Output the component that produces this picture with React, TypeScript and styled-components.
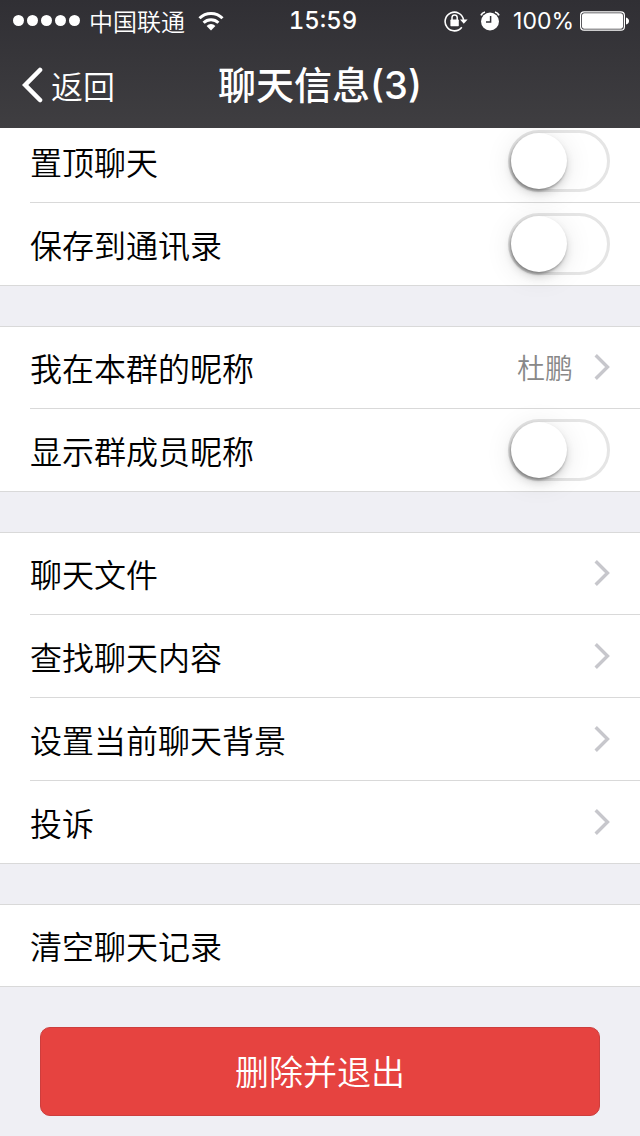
import React, { useState } from "react";
import styled, { createGlobalStyle } from "styled-components";

const GlobalStyle = createGlobalStyle`
  *, *::before, *::after { box-sizing: border-box; }
  body {
    margin: 0;
    background: #efeff4;
    font-family: "Noto Sans CJK SC", sans-serif;
    font-weight: 350;
    -webkit-font-smoothing: antialiased;
  }
  button, input { font: inherit; margin: 0; }
`;

const latinFirst = `Inter, "Noto Sans CJK SC", sans-serif`;

const Page = styled.div`
  min-height: 100vh;
`;

const Header = styled.header`
  position: sticky;
  top: 0;
  z-index: 1;
  color: #fff;
  background: linear-gradient(#302f34, #3f3e41);
`;

const StatusBar = styled.div`
  display: grid;
  grid-template-columns: 1fr auto 1fr;
  align-items: center;
  height: 41px;
  padding: 0 11px 0 13px;
  font-size: 24px;
  line-height: 38px;
`;

const StatusGroup = styled.div<{ $end?: boolean }>`
  display: flex;
  align-items: center;
  justify-content: ${(p) => (p.$end ? "flex-end" : "flex-start")};
`;

const SignalDots = styled.div`
  display: flex;
  gap: 3px;
  margin-right: 9px;
`;

const Dot = styled.span`
  width: 11px;
  height: 11px;
  border-radius: 50%;
  background: #fff;
`;

const Carrier = styled.span`
  margin-right: 13px;
`;

const Time = styled.time`
  padding-left: 4px;
  font-family: ${latinFirst};
  font-weight: 500;
  font-variant-numeric: tabular-nums;
`;

const Percent = styled.span`
  margin: 0 6px 0 13px;
  font-family: ${latinFirst};
  font-size: 23px;
  font-weight: 400;
`;

const NavBar = styled.div`
  display: grid;
  grid-template-columns: 1fr auto 1fr;
  align-items: center;
  height: 87px;
  padding: 0 22px;
`;

const BackButton = styled.button`
  display: flex;
  align-items: center;
  gap: 8px;
  justify-self: start;
  padding: 0;
  border: 0;
  background: none;
  color: inherit;
  font-size: 32px;
  line-height: 46px;
`;

const Title = styled.h1`
  margin: 0;
  font-family: ${latinFirst};
  font-size: 38px;
  font-weight: 500;
  line-height: 48px;
`;

const Content = styled.main`
  display: flex;
  flex-direction: column;
  gap: 40px;
  margin-top: -8px;
  padding-bottom: 20px;
`;

const Group = styled.section`
  background: #fff;
  border-bottom: 1px solid #d9d9d9;
`;

const rowLayout = `
  display: flex;
  align-items: center;
  width: 100%;
  height: 83px;
  padding: 0 30px 1px 0;
  border: 0;
  border-bottom: 1px solid #d9d9d9;
  background: none;
  color: #000;
  font-size: 32px;
  line-height: 48px;
  text-align: left;
`;

const Item = styled.div`
  padding-left: 30px;
  &:first-child { border-top: 1px solid #d9d9d9; }
  &:first-child > * { height: 82px; }
  &:last-child > * { height: 82px; border-bottom: 0; }
  &:first-child:last-child > * { height: 81px; }
`;

const SwitchRow = styled.label`
  ${rowLayout}
`;

const LinkRow = styled.button`
  ${rowLayout}
`;

const Label = styled.span`
  flex: 1;
`;

const Value = styled.span`
  margin-right: 21px;
  color: #888;
  font-size: 28px;
`;

const Switch = styled.input`
  appearance: none;
  width: 102px;
  height: 62px;
  border: 3px solid #e5e5e5;
  border-radius: 31px;
  background: #fff;
  &::before {
    content: "";
    display: block;
    width: 56px;
    height: 56px;
    border-radius: 50%;
    background: #fff;
    box-shadow: 0 4px 28px rgba(0, 0, 0, 0.1), 0 5px 8px rgba(0, 0, 0, 0.12),
      -1px 2px 3px rgba(0, 0, 0, 0.35);
  }
  &:checked { background: #4cd964; border-color: #4cd964; }
  &:checked::before { margin-left: 40px; }
`;

const DeleteButton = styled.button`
  height: 89px;
  margin: 0 40px;
  padding: 0 0 2px;
  border: 1px solid #cd3e3d;
  border-radius: 10px;
  background: #e64340;
  color: #fff;
  font-size: 34px;
  line-height: 48px;
`;

const WifiIcon = () => (
  <svg width="26" height="20" viewBox="0 0 26 20" fill="none" stroke="#fff" strokeWidth="3" aria-hidden="true">
    <path d="M1.5 7.2a16.3 16.3 0 0 1 23 0" />
    <path d="M5.6 11.7a10.5 10.5 0 0 1 14.8 0" />
    <path d="M13 19.4l-4.4-4.5a6.2 6.2 0 0 1 8.8 0z" fill="#fff" stroke="none" />
  </svg>
);

const RotationLockIcon = () => (
  <svg width="24" height="22" viewBox="0 0 24 22" fill="none" stroke="#fff" aria-hidden="true">
    <path d="M17.8 17.2A9.3 9.3 0 1 1 19.6 10" strokeWidth="1.6" />
    <path d="M16 9.4h7.6l-3.8 4.4z" fill="#fff" stroke="none" />
    <rect x="6.4" y="9.6" width="8.4" height="6.6" rx="0.6" fill="#fff" stroke="none" />
    <path d="M8 10V7.6a2.6 2.6 0 0 1 5.2 0V10" strokeWidth="1.5" />
  </svg>
);

const AlarmIcon = () => (
  <svg width="20" height="20" viewBox="0 0 20 20" fill="none" aria-hidden="true">
    <circle cx="10" cy="10.5" r="9" fill="#fff" />
    <path d="M1 4.4Q2 1.8 5 1M19 4.4Q18 1.8 15 1" stroke="#fff" strokeWidth="1.8" />
    <path d="M10.6 5v6H6" stroke="#333238" strokeWidth="1.5" />
  </svg>
);

const BatteryIcon = () => (
  <svg width="49" height="20" viewBox="0 0 49 20" fill="none" aria-hidden="true">
    <rect x="0.6" y="0.8" width="43.8" height="18.4" rx="3.5" stroke="#fff" strokeWidth="1.2" />
    <rect x="2" y="2.2" width="41" height="15.6" rx="2.2" fill="#fff" />
    <path d="M46 6.5q3 1 3 3.5t-3 3.5z" fill="#fff" />
  </svg>
);

const StatusIcons = styled.span`
  display: flex;
  align-items: center;
  gap: 12px;
`;

const BackIcon = () => (
  <svg width="21" height="36" viewBox="0 0 21 36" fill="none" stroke="#fff" strokeWidth="4.6" strokeLinecap="round" aria-hidden="true">
    <path d="M18 3L3.2 18 18 33" />
  </svg>
);

const Chevron = () => (
  <svg width="16" height="26" viewBox="0 0 16 26" fill="none" stroke="#c7c7cc" strokeWidth="3.4" aria-hidden="true">
    <path d="M1.7 1.2L13.5 13 1.7 24.8" />
  </svg>
);

const SwitchItem = ({ label }: { label: string }) => {
  const [on, setOn] = useState(false);
  return (
    <Item>
      <SwitchRow>
        <Label>{label}</Label>
        <Switch type="checkbox" role="switch" checked={on} onChange={(e) => setOn(e.target.checked)} />
      </SwitchRow>
    </Item>
  );
};

const LinkItem = ({ label, value, plain }: { label: string; value?: string; plain?: boolean }) => (
  <Item>
    <LinkRow type="button">
      <Label>{label}</Label>
      {value && <Value>{value}</Value>}
      {!plain && <Chevron />}
    </LinkRow>
  </Item>
);

export default function App() {
  return (
    <Page lang="zh-CN">
      <GlobalStyle />
      <Header>
        <StatusBar>
          <StatusGroup>
            <SignalDots>
              {[0, 1, 2, 3, 4].map((i) => (
                <Dot key={i} />
              ))}
            </SignalDots>
            <Carrier>中国联通</Carrier>
            <WifiIcon />
          </StatusGroup>
          <Time>15:59</Time>
          <StatusGroup $end>
            <StatusIcons>
              <RotationLockIcon />
              <AlarmIcon />
            </StatusIcons>
            <Percent>100%</Percent>
            <BatteryIcon />
          </StatusGroup>
        </StatusBar>
        <NavBar>
          <BackButton type="button">
            <BackIcon />
            返回
          </BackButton>
          <Title>聊天信息(3)</Title>
        </NavBar>
      </Header>
      <Content>
        <Group>
          <SwitchItem label="置顶聊天" />
          <SwitchItem label="保存到通讯录" />
        </Group>
        <Group>
          <LinkItem label="我在本群的昵称" value="杜鹏" />
          <SwitchItem label="显示群成员昵称" />
        </Group>
        <Group>
          <LinkItem label="聊天文件" />
          <LinkItem label="查找聊天内容" />
          <LinkItem label="设置当前聊天背景" />
          <LinkItem label="投诉" />
        </Group>
        <Group>
          <LinkItem label="清空聊天记录" plain />
        </Group>
        <DeleteButton type="button">删除并退出</DeleteButton>
      </Content>
    </Page>
  );
}
